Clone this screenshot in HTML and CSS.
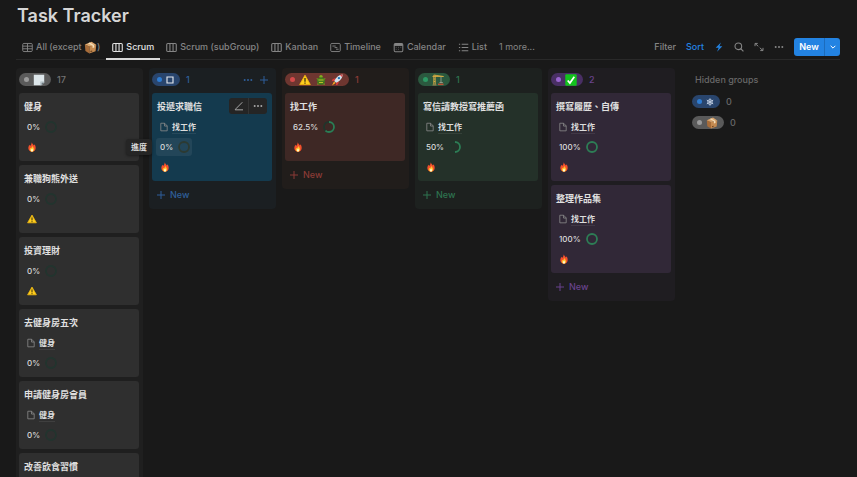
FILE: index.html
```html
<!DOCTYPE html>
<html lang="zh-Hant">
<head>
<meta charset="utf-8">
<meta name="viewport" content="width=device-width, initial-scale=1">
<title>Task Tracker</title>
<link rel="stylesheet" href="styles.css">
</head>
<body>
<svg class="sprite" aria-hidden="true">
  <symbol id="board" viewBox="0 0 12 12"><g fill="none" stroke="currentColor" stroke-width="1.2"><rect x=".8" y="1.6" width="10.4" height="8.8" rx="1.2"/><path d="M4.3 1.6v8.8M7.7 1.6v8.8"/></g></symbol>
  <symbol id="table" viewBox="0 0 12 12"><g fill="none" stroke="currentColor"><rect x=".8" y="1.6" width="10.4" height="8.8" rx="1.2"/><path d="M.8 4.5h10.4M.8 7.4h10.4M6 1.6v8.8"/></g></symbol>
  <symbol id="timeline" viewBox="0 0 12 12"><g fill="none" stroke="currentColor"><rect x=".8" y="1.6" width="10.4" height="8.8" rx="1.2"/><path d="M2.6 4.4h3.6M5 6.1h3M6.6 7.9h2.8"/></g></symbol>
  <symbol id="calendar" viewBox="0 0 12 12"><rect x="1.3" y="1.6" width="9.4" height="9" rx="1.3" fill="none" stroke="currentColor" stroke-width="1.1"/><path d="M1.3 2h9.4v2.3H1.3z" fill="currentColor"/><path d="M3 5.8h1M5.5 5.8h1M8 5.8h1M3 8h1M5.5 8h1" stroke="currentColor" opacity=".6"/></symbol>
  <symbol id="list" viewBox="0 0 12 12"><path d="M1 2.5h1.4M1 6h1.4M1 9.5h1.4M4 2.5h7.2M4 6h7.2M4 9.5h7.2" stroke="currentColor" stroke-width="1.1"/></symbol>
  <symbol id="bolt" viewBox="0 0 12 12"><path d="M8.3.5 2 7h3.6L3.700 11.600 10 5H6.500z" fill="currentColor"/></symbol>
  <symbol id="search" viewBox="0 0 12 12"><g fill="none" stroke="currentColor" stroke-width="1.3"><circle cx="5.2" cy="5.1" r="4"/><path d="m8.2 8.1 3.1 3.1"/></g></symbol>
  <symbol id="expand" viewBox="0 0 12 12"><path d="M1.200 5V1.700h3.300M1.200 1.700l3.900 3.400M10.800 7v3.300H7.500M10.800 10.300l-3.900-3.400" fill="none" stroke="currentColor" stroke-width="1.2"/></symbol>
  <symbol id="dots" viewBox="0 0 12 12"><g fill="currentColor"><circle cx="2" cy="6" r="1.2"/><circle cx="6" cy="6" r="1.2"/><circle cx="10" cy="6" r="1.2"/></g></symbol>
  <symbol id="chevron" viewBox="0 0 12 12"><path d="m2.5 4.2 3.5 3.5 3.5-3.5" fill="none" stroke="currentColor" stroke-width="1.5"/></symbol>
  <symbol id="plus" viewBox="0 0 12 12"><path d="M6 1.2v9.6M1.2 6h9.6" stroke="currentColor" stroke-width="1.2"/></symbol>
  <symbol id="pencil" viewBox="0 0 12 12"><path d="M10 1.5 2.2 9.4 1.4 10.6h9.4" fill="none" stroke="currentColor" stroke-width="1.2"/></symbol>
  <symbol id="page" viewBox="0 0 10 12"><path d="M1 1.3h4.8L9 4.6v6.2H1zM5.6 1.3v3.5H9" fill="none" stroke="currentColor" stroke-linejoin="round"/></symbol>
  <symbol id="ring" viewBox="0 0 12 12"><circle cx="6" cy="6" r="5" fill="none" stroke="currentColor" stroke-width="1.800"/></symbol>
  <symbol id="fire" viewBox="0 0 12 12"><path d="M5.6.3c.6 2 2 2.6 2.6 4 .5-.4.7-1 .7-1.6 1 1.3 1.7 2.9 1.5 4.9-.2 2.5-1.8 4.1-4.3 4.1S1.8 10 1.6 7.6C1.5 5.9 2.3 4.700 2.700 3.300c.5.4.8.8.9 1.500C5 3.700 5.700 2.200 5.600.3z" fill="#f4512c"/><path d="M6.200 4.300c.3 1.700 2.300 2.500 2.300 4.700 0 1.500-1 2.600-2.500 2.600S3.300 10.600 3.300 9.100c0-1 .5-1.600.9-2.200.3.300.4.6.5.9.9-.9 1.500-2 1.500-3.500z" fill="#ffc32b"/><path d="M6.100 7.600c.2.900 1.200 1.400 1.200 2.500 0 .8-.5 1.400-1.300 1.400s-1.300-.6-1.300-1.400c0-1.100 1.200-1.500 1.400-2.500z" fill="#fff5cf"/></symbol>
  <symbol id="warn" viewBox="0 0 12 12"><path d="M6 1.200 11.300 10.600H.7z" fill="#ffce1f" stroke="#f2b90d" stroke-width=".9" stroke-linejoin="round"/><path d="M6 4.100v3.600M6 8.600v1.200" stroke="#33290a" stroke-width="1.200"/></symbol>
  <symbol id="box" viewBox="0 0 12 12"><path d="M.8 3.300 5 5v6.600L1.300 9.300z" fill="#a86c39"/><path d="m5 5 6.300-1.600-.6 6.100L5 11.600z" fill="#c48a50"/><path d="M.8 3.300 7 .6l4.300 2.800L5 5z" fill="#dca76e"/><path d="m3.700 2 4.200 2.300v2.200l1.600-.5V3.900L5.300 1.400z" fill="#f5dfba"/><path d="m6 9.800 1.600-.5" stroke="#69401f"/></symbol>
  <symbol id="note" viewBox="0 0 12 12"><path d="M.8.800h10.400v7.700l-2.700 2.700H.8z" fill="#dde6ea"/><path d="M11.200 8.500H8.500v2.700z" fill="#66747b"/><path d="M7.600 11.200V7.800h3.600" fill="none" stroke="#aebbc1" stroke-width=".7"/></symbol>
  <symbol id="square" viewBox="0 0 12 12"><path d="M1.500 1.500h9v9h-9z" fill="none" stroke="#e5e8ed" stroke-width="1.700"/></symbol>
  <symbol id="turtle" viewBox="0 0 12 12"><g fill="#7fae21"><circle cx="6" cy="2.600" r="1.700"/><path d="M1.400 4.200 4 5 3 7zM10.600 4.200 8 5l1 2zM2 10.800 3.300 8l1.700 2zM10 10.800 8.700 8 7 10z"/></g><ellipse cx="6" cy="7" rx="3.900" ry="3.700" fill="#447a1d"/><path d="M3.400 6h5.200M4 8.500h4" stroke="#c8c62a" stroke-width=".9"/></symbol>
  <symbol id="rocket" viewBox="0 0 12 12"><path d="M4.500 4 1.600 5.200.8 7.300l2.700-.5zM8 7.500l-1.100 3-2 .8.400-2.900z" fill="#dc3a39"/><path d="M11.600.4C8.500.300 5.300 2.600 3.200 6.900l1.900 1.900C9.400 6.700 11.700 3.500 11.600.4z" fill="#d6e3ec"/><path d="M11.600.4 9 1l2 2z" fill="#e14545"/><circle cx="7.900" cy="4.100" r="1.200" fill="#2476b8"/><path d="m3 7.500 1.500 1.500L1 11.500z" fill="#ffae20"/></symbol>
  <symbol id="crane" viewBox="0 0 12 12"><path d="M3.200 1v9.800M1.800 1v9.800M.5 2.500h11M1.800 1l9.700 1.500M1.800 5h1.400M1.800 7.500h1.400" fill="none" stroke="#d8aa43" stroke-width=".9"/><path d="M9 2.800v5.500M7.500 8.500h3.300" stroke="#a3a99b" stroke-width=".8"/><path d="M6 10.300h5.500" stroke="#bd5337" stroke-width="1.500"/><path d="M.5 11h4" stroke="#9b8051"/></symbol>
  <symbol id="check" viewBox="0 0 12 12"><rect x=".3" y=".3" width="11.400" height="11.400" rx="1" fill="#13c31d"/><path d="m2.700 6.500 2.200 2.600 4.400-6.400" fill="none" stroke="#fff" stroke-width="1.700"/></symbol>
  <symbol id="snow" viewBox="0 0 12 12"><g fill="none" stroke="#d5e1f2"><path d="M6 .5v11M1.200 3.200l9.600 5.600M10.800 3.200 1.200 8.800" stroke-width="1.200"/><circle cx="6" cy="6" r="3.600"/></g></symbol>
</svg>

<header class="top">
  <h1>Task Tracker</h1>
  <div class="bar">
    <nav class="tabs">
      <a href="#all"><svg><use href="#table"/></svg><span class="mix">All (except <svg class="emoji"><use href="#box"/></svg>)</span></a>
      <a href="#scrum" class="active"><svg><use href="#board"/></svg>Scrum</a>
      <a href="#sub"><svg><use href="#board"/></svg>Scrum (subGroup)</a>
      <a href="#kanban"><svg><use href="#board"/></svg>Kanban</a>
      <a href="#time"><svg><use href="#timeline"/></svg>Timeline</a>
      <a href="#cal"><svg><use href="#calendar"/></svg>Calendar</a>
      <a href="#lists"><svg><use href="#list"/></svg>List</a>
      <a href="#more" class="more">1 more...</a>
    </nav>
    <div class="tools">
      <button>Filter</button>
      <button class="on">Sort</button>
      <button class="on" aria-label="Automations"><svg><use href="#bolt"/></svg></button>
      <button aria-label="Search"><svg><use href="#search"/></svg></button>
      <button aria-label="Expand"><svg><use href="#expand"/></svg></button>
      <button aria-label="More"><svg><use href="#dots"/></svg></button>
      <div class="create"><button>New</button><button class="drop" aria-label="Templates"><svg><use href="#chevron"/></svg></button></div>
    </div>
  </div>
</header>

<main class="board">
  <section class="column gray">
    <header><span class="pill"><i></i><svg class="big"><use href="#note"/></svg></span><span>17</span></header>
    <article><h2>健身</h2><div class="pct">0%<svg class="ring empty"><use href="#ring"/></svg></div><div class="tag"><svg><use href="#fire"/></svg></div></article>
    <article><h2>兼職狗熊外送</h2><div class="pct">0%<svg class="ring empty"><use href="#ring"/></svg></div><div class="tag"><svg><use href="#warn"/></svg></div></article>
    <article><h2>投資理財</h2><div class="pct">0%<svg class="ring empty"><use href="#ring"/></svg></div><div class="tag"><svg><use href="#warn"/></svg></div></article>
    <article><h2>去健身房五次</h2><div class="rel"><svg><use href="#page"/></svg><a href="#p1">健身</a></div><div class="pct">0%<svg class="ring empty"><use href="#ring"/></svg></div></article>
    <article><h2>申請健身房會員</h2><div class="rel"><svg><use href="#page"/></svg><a href="#p1">健身</a></div><div class="pct">0%<svg class="ring empty"><use href="#ring"/></svg></div></article>
    <article><h2>改善飲食習慣</h2></article>
  </section>

  <section class="column blue">
    <header><span class="pill"><i></i><svg class="small"><use href="#square"/></svg></span><span>1</span>
      <div class="actions"><button aria-label="Group options"><svg><use href="#dots"/></svg></button><button aria-label="Add"><svg><use href="#plus"/></svg></button></div></header>
    <article><h2>投遞求職信</h2>
      <div class="hover"><button aria-label="Edit"><svg><use href="#pencil"/></svg></button><button aria-label="Card options"><svg><use href="#dots"/></svg></button></div>
      <div class="rel"><svg><use href="#page"/></svg><a href="#p2">找工作</a></div>
      <div class="pct lit">0%<svg class="ring dim"><use href="#ring"/></svg><span class="tip" role="tooltip">進度</span></div>
      <div class="tag"><svg><use href="#fire"/></svg></div></article>
    <button class="new"><svg><use href="#plus"/></svg>New</button>
  </section>

  <section class="column red">
    <header><span class="pill"><i></i><svg class="big"><use href="#warn"/></svg><svg class="big"><use href="#turtle"/></svg><svg class="big"><use href="#rocket"/></svg></span><span>1</span></header>
    <article><h2>找工作</h2><div class="pct">62.5%<svg class="ring" viewBox="0 0 12 12"><circle class="track" cx="6" cy="6" r="5"/><circle class="arc" cx="6" cy="6" r="5" pathLength="100" stroke-dasharray="62.5 100" transform="rotate(-90 6 6)"/></svg></div><div class="tag"><svg><use href="#fire"/></svg></div></article>
    <button class="new"><svg><use href="#plus"/></svg>New</button>
  </section>

  <section class="column green">
    <header><span class="pill"><i></i><svg class="big"><use href="#crane"/></svg></span><span>1</span></header>
    <article><h2>寫信請教授寫推薦函</h2><div class="rel"><svg><use href="#page"/></svg><a href="#p2">找工作</a></div><div class="pct">50%<svg class="ring" viewBox="0 0 12 12"><circle class="track" cx="6" cy="6" r="5"/><circle class="arc" cx="6" cy="6" r="5" pathLength="100" stroke-dasharray="50 100" transform="rotate(-90 6 6)"/></svg></div><div class="tag"><svg><use href="#fire"/></svg></div></article>
    <button class="new"><svg><use href="#plus"/></svg>New</button>
  </section>

  <section class="column purple">
    <header><span class="pill"><i></i><svg class="big"><use href="#check"/></svg></span><span>2</span></header>
    <article><h2>撰寫履歷、自傳</h2><div class="rel"><svg><use href="#page"/></svg><a href="#p2">找工作</a></div><div class="pct">100%<svg class="ring full"><use href="#ring"/></svg></div><div class="tag"><svg><use href="#fire"/></svg></div></article>
    <article><h2>整理作品集</h2><div class="rel"><svg><use href="#page"/></svg><a href="#p2">找工作</a></div><div class="pct">100%<svg class="ring full"><use href="#ring"/></svg></div><div class="tag"><svg><use href="#fire"/></svg></div></article>
    <button class="new"><svg><use href="#plus"/></svg>New</button>
  </section>

  <aside class="hidden-groups">
    <h3>Hidden groups</h3>
    <div class="group blue"><span class="pill"><i></i><svg class="small"><use href="#snow"/></svg></span><span>0</span></div>
    <div class="group gray"><span class="pill"><i></i><svg class="big"><use href="#box"/></svg></span><span>0</span></div>
  </aside>
</main>
</body>
</html>
```
FILE: styles.css
```css
* { box-sizing: border-box; }

body {
  margin: 0;
  height: 100vh;
  display: flex;
  flex-direction: column;
  overflow: hidden;
  background: #191919;
  color: #d6d6d6;
  font: 500 9px/14px Inter, "Noto Sans CJK TC", sans-serif;
}

h1, h2, h3 { margin: 0; }
svg { width: 10px; height: 10px; flex: none; display: block; }
a { color: inherit; text-decoration: none; }
.sprite { position: absolute; width: 0; height: 0; }

button {
  display: flex;
  align-items: center;
  padding: 0;
  border: 0;
  background: none;
  color: inherit;
  font: inherit;
}

/* Title and view bar */
.top { padding: 4px 17px 0 16px; }
h1 { font-size: 18px; line-height: 24px; font-weight: 600; padding-left: 1px; }

.bar {
  display: flex;
  justify-content: space-between;
  height: 32px;
  border-bottom: 1px solid #292929;
  color: #858585;
}

.tabs { display: flex; padding-top: 6px; }
.tabs a {
  display: flex;
  align-items: center;
  gap: 3px;
  height: 26px;
  padding: 0 6px;
  white-space: nowrap;
}
.tabs a > svg { width: 11px; height: 11px; }
.tabs .active { color: #e2e2e2; box-shadow: inset 0 -2px #d9d9d9; }
.tabs .more { font-weight: 400; }
.mix { display: flex; align-items: center; white-space: pre; }
.emoji { width: 13px; height: 13px; }

.tools { display: flex; align-items: center; gap: 10px; padding-top: 6px; height: 32px; }
.on { color: #2383e2; }
.create { display: flex; height: 18px; border-radius: 3px; overflow: hidden; background: #2383e2; color: #fff; }
.create button { width: 30px; justify-content: center; font-weight: 600; }
.create .drop { width: 16px; border-left: 1px solid #1c6cbc; }
.create svg { width: 8px; height: 8px; }

/* Board */
.board {
  flex: 1;
  min-height: 0;
  overflow: hidden;
  display: grid;
  grid-template-columns: repeat(5, minmax(127px, 15fr)) minmax(159px, 19fr);
  gap: 6px;
  align-items: start;
  padding: 8px 17px 0 16px;
}

.column { display: flex; flex-direction: column; gap: 4px; padding: 0 4px 0 3px; border-radius: 4px; background: var(--col); color: var(--ink); }
.column header { display: flex; align-items: center; gap: 6px; height: 21px; padding-top: 2px; }
.actions { display: flex; gap: 6px; margin-left: auto; padding-right: 3px; }

.gray { --col: #1f1f1f; --card: #2f2f2f; --ink: #757575; --pill: #5a5a5a; --dot: #9b9b9b; }
.blue { --col: #1b1f22; --card: #143a4e; --ink: #2f5f9b; --pill: #29456d; --dot: #2e7cd1; }
.red { --col: #211d1b; --card: #3e2825; --ink: #8b3b36; --pill: #6e3630; --dot: #d24a4a; }
.green { --col: #1d211f; --card: #243129; --ink: #2e7450; --pill: #2b593f; --dot: #2d9964; }
.purple { --col: #1f1d21; --card: #312837; --ink: #69438d; --pill: #492f64; --dot: #9a64d0; }

.pill {
  display: flex;
  align-items: center;
  gap: 4px;
  height: 13px;
  padding: 0 6px 0 5px;
  border-radius: 7px;
  background: var(--pill);
}
.pill i { width: 5px; height: 5px; border-radius: 50%; background: var(--dot); }
.pill .big { width: 12px; height: 12px; }
.pill .small { width: 8px; height: 8px; }

article {
  position: relative;
  min-height: 68px;
  padding: 4px;
  border-radius: 3px;
  background: var(--card);
  color: #dcdcdc;
  font-size: 8px;
}
article h2 { font-size: 9px; line-height: 20px; font-weight: 700; padding-left: 1px; color: #e0e0e0; }
.rel, .pct, .tag { display: flex; align-items: center; height: 20px; padding-left: 4px; }
.rel { gap: 4px; font-weight: 700; }
.rel svg { width: 8px; height: 10px; color: #8b8b8b; }
.rel a { line-height: 12px; border-bottom: 1px solid #ffffff14; }
.pct { gap: 5px; }
.ring { width: 12px; height: 12px; }
.ring circle { fill: none; stroke-width: 1.8; }
.track { stroke: #20352b; }
.arc { stroke: #2d7d55; }
.empty { color: #22342e; }
.dim { color: #2c3a32; }
.full { color: #2d7d55; }

.lit { position: relative; width: 36px; height: 18px; margin: 1px 0; border-radius: 3px; background: #234659; }
.tip {
  position: absolute;
  right: calc(100% + 4px);
  padding: 1px 5px;
  border-radius: 3px;
  background: #252525;
  box-shadow: 0 1px 3px #0006;
  white-space: nowrap;
  font-weight: 700;
}

.hover { position: absolute; top: 5px; right: 5px; display: flex; border-radius: 3px; overflow: hidden; background: #252525; color: #a6a6a6; }
.hover button { width: 19px; height: 16px; justify-content: center; }
.hover button + button { border-left: 1px solid #353535; }

.new { gap: 4px; height: 28px; margin-top: -4px; padding-left: 4px; }

.hidden-groups { display: grid; gap: 8px; padding-left: 11px; color: #686868; }
.hidden-groups h3 { font: inherit; line-height: 24px; padding-left: 3px; margin-bottom: -5px; }
.group { display: flex; align-items: center; gap: 6px; height: 13px; }
```
